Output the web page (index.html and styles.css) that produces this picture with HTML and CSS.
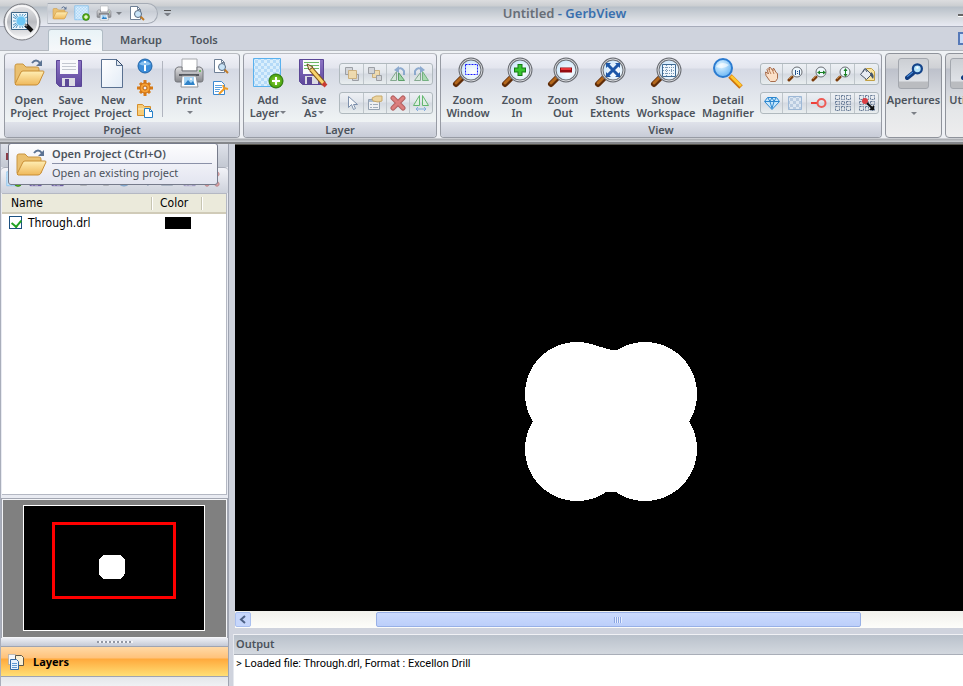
FILE: index.html
```html
<!DOCTYPE html>
<html lang="en">
<head>
    <meta charset="UTF-8">
    <meta name="viewport" content="width=device-width, initial-scale=1.0">
    <title>Untitled - GerbView</title>
    <link rel="stylesheet" href="styles.css">
</head>
<body>
    <!-- icon set -->
    <svg class="sprite" width="0" height="0" aria-hidden="true">
        <defs>
            <linearGradient id="gFolder" x1="0" y1="0" x2="0" y2="1"><stop offset="0" stop-color="#ffeeb4"/><stop offset="1" stop-color="#efb85a"/></linearGradient>
            <linearGradient id="gPage" x1="0" y1="0" x2="1" y2="1"><stop offset="0" stop-color="#ffffff"/><stop offset="1" stop-color="#e2ebf6"/></linearGradient>
            <linearGradient id="gGrey" x1="0" y1="0" x2="0" y2="1"><stop offset="0" stop-color="#e0e0e2"/><stop offset="1" stop-color="#85878c"/></linearGradient>
            <linearGradient id="gPurple" x1="0" y1="0" x2="0" y2="1"><stop offset="0" stop-color="#8d74c4"/><stop offset="1" stop-color="#5d479c"/></linearGradient>
            <linearGradient id="gDisc" x1="0" y1="0" x2="0" y2="1"><stop offset="0" stop-color="#e9e9eb"/><stop offset=".5" stop-color="#b9bbc0"/><stop offset="1" stop-color="#fbfbfc"/></linearGradient>
            <radialGradient id="gLens" cx=".6" cy=".6" r=".7"><stop offset="0" stop-color="#ffffff"/><stop offset="1" stop-color="#c3e2fa"/></radialGradient>
            <radialGradient id="gBlueLens" cx=".4" cy=".35" r=".7"><stop offset="0" stop-color="#e2f5ff"/><stop offset="1" stop-color="#65b4f5"/></radialGradient>
            <radialGradient id="gGreen"><stop offset="0" stop-color="#9fe03c"/><stop offset="1" stop-color="#3f9a0c"/></radialGradient>
            <pattern id="pCheck" width="6" height="6" patternUnits="userSpaceOnUse"><rect width="6" height="6" fill="#d9eefc"/><rect width="3" height="3" fill="#b5daf8"/><rect x="3" y="3" width="3" height="3" fill="#b5daf8"/></pattern>
            <pattern id="pFade" width="6" height="6" patternUnits="userSpaceOnUse"><rect width="6" height="6" fill="#dce6f1"/><rect width="3" height="3" fill="#b9cbe0"/><rect x="3" y="3" width="3" height="3" fill="#b9cbe0"/></pattern>
        </defs>

        <symbol id="folder" viewBox="0 0 32 32">
            <path d="M2 26V9q0-2 2-2h6l3 3h11q2 0 2 2v14z" fill="#eac070" stroke="#c99643"/>
            <path d="M2 27l6-12q1-1 2-1h20q1 0 1 1l-5 11q-1 2-3 2H3z" fill="url(#gFolder)" stroke="#c98e35"/>
            <path d="M19 6q4-5 8 0" fill="none" stroke="#5c7393" stroke-width="2"/>
            <path d="M29 3v6h-6z" fill="#5c7393"/>
        </symbol>
        <symbol id="floppy" viewBox="0 0 32 32">
            <path d="M1.500 3.500h25v26h-22l-3-3z" fill="url(#gPurple)" stroke="#5a4696"/>
            <path d="M5 3h18v14H5z" fill="#f8f9fb"/>
            <path d="M7 6.500h14M7 9.500h14M7 12.500h14" stroke="#c3c7cf"/>
            <path d="M7 21h13v8H7z" fill="#dcdce4"/>
            <path d="M10 22h4v7h-4z" fill="#5b4896"/>
        </symbol>
        <symbol id="page" viewBox="0 0 32 32">
            <path d="M4.500 2.500h15l6 6v22h-21z" fill="url(#gPage)" stroke="#5a7191"/>
            <path d="M19.500 2.500v6h6" fill="#dfe7f0" stroke="#5a7191"/>
            <path d="M19.500 2.500l6 6" stroke="#2e4464"/>
        </symbol>
        <symbol id="printer" viewBox="0 0 32 32">
            <path d="M9 2h15v12H9z" fill="#fff" stroke="#a5a8ad"/>
            <path d="M5 10h4v4h15v-4h3q3 1 3 4v9q0 2-2 2H4q-2 0-2-2v-9q0-3 3-4z" fill="url(#gGrey)" stroke="#75777c"/>
            <path d="M6 18h20" stroke="#55585e" stroke-width="2"/>
            <circle cx="27" cy="14" r="1" fill="#4fb53f"/>
            <path d="M9 19h14l2 11H8z" fill="#fff" stroke="#8d9197"/>
            <path d="M11 20h10v8H11z" fill="#a5d4f5"/>
            <path d="M11 28l4-5 3 3 2-2 2 4z" fill="#2f82c8"/>
            <circle cx="18" cy="22" r="1" fill="#fff"/>
        </symbol>
        <symbol id="preview" viewBox="0 0 16 16">
            <path d="M1.500 1.500h7l3 3v10h-10z" fill="#fff" stroke="#6f8096"/>
            <path d="M8.500 1.500v3h3" fill="none" stroke="#6f8096"/>
            <path d="M11 11l4 4" stroke="#c07a25" stroke-width="2"/>
            <circle cx="9" cy="9" r="3.500" fill="#c9e4f8" stroke="#586a80"/>
        </symbol>
        <symbol id="info" viewBox="0 0 16 16">
            <circle cx="8" cy="8" r="7" fill="#3c8cd8" stroke="#1f64a8"/>
            <path d="M2 6q6-6 12 0-6 3-12 0" fill="#8cc2f0"/>
            <path d="M7 7h2v6H7zM7 3h2v2H7z" fill="#fff"/>
        </symbol>
        <symbol id="gear" viewBox="0 0 16 16">
            <path d="M8 0v16M0 8h16M3 3l10 10M13 3L3 13" stroke="#d87b17" stroke-width="3"/>
            <circle cx="8" cy="8" r="5" fill="#f7a235" stroke="#cb6e12"/>
            <circle cx="8" cy="8" r="2" fill="#f1f1f3" stroke="#b95f0c"/>
        </symbol>
        <symbol id="folderdoc" viewBox="0 0 16 16">
            <path d="M.5 13.500v-11h5l2 2h6v9z" fill="#f6cc79" stroke="#d58e2b"/>
            <path d="M1 7h12" stroke="#fff0c2"/>
            <path d="M7.500 6.500h5l3 3v6h-8z" fill="#fff" stroke="#2580c8"/>
            <path d="M12.500 6.500v3h3" fill="none" stroke="#2580c8"/>
        </symbol>
        <symbol id="docwrench" viewBox="0 0 16 16">
            <path d="M.5 1.500h8l3 3v10H.5z" fill="#fff" stroke="#3a88d0"/>
            <path d="M2 5.500h7M2 7.500h7M2 9.500h5M2 11.500h4" stroke="#5da2df"/>
            <path d="M6 14l6-6M10 5l1 3 4 1" stroke="#ef9b24" stroke-width="2" fill="none"/>
        </symbol>
        <symbol id="addlayer" viewBox="0 0 32 32">
            <path d="M1.500 1.500h27v28h-27z" fill="url(#pCheck)" stroke="#5ab1ee"/>
            <circle cx="24" cy="24" r="7" fill="url(#gGreen)" stroke="#2b7508"/>
            <path d="M24 20v8M20 24h8" stroke="#fff" stroke-width="2"/>
        </symbol>
        <symbol id="saveas" viewBox="0 0 32 32">
            <path d="M1.500 2.500h24v25h-21l-3-3z" fill="url(#gPurple)" stroke="#5a4696"/>
            <path d="M5 3h17v14H5z" fill="#fafbfa"/>
            <path d="M6 5.500h15M6 8.500h15M6 11.500h15" stroke="#6cb864"/>
            <path d="M7 19h13v8H7z" fill="#dcdce4"/>
            <path d="M9 20h5v7H9z" fill="#5b4896"/>
            <path d="M13 12l13 15" stroke="#83571b" stroke-width="5"/>
            <path d="M13 12l13 15" stroke="#f8d36c" stroke-width="3"/>
            <path d="M25 26l3 3" stroke="#c83c33" stroke-width="4"/>
            <path d="M9 7l2 6 4-3z" fill="#f4dfb3" stroke="#6b4a1c"/>
        </symbol>
        <symbol id="zoomlens" viewBox="0 0 32 32">
            <path d="M10 21l-6 6" stroke="#5f2c08" stroke-width="6" stroke-linecap="round"/>
            <path d="M10 20l-6 6" stroke="#b3671c" stroke-width="3" stroke-linecap="round"/>
            <path d="M10 21l3-3" stroke="#555" stroke-width="2"/>
            <circle cx="19" cy="13" r="11" fill="url(#gLens)" stroke="#6b6e74" stroke-width="3"/>
            <circle cx="19" cy="13" r="11" fill="none" stroke="#d8dade"/>
        </symbol>
        <symbol id="detail" viewBox="0 0 32 32">
            <path d="M18 19l11 11" stroke="#ce740b" stroke-width="5"/>
            <path d="M19 19l10 10" stroke="#ffc62f" stroke-width="3"/>
            <circle cx="11" cy="11" r="9" fill="url(#gBlueLens)" stroke="#2b7bd0" stroke-width="2"/>
            <path d="M4 10q5-7 13-2-5 5-13 2" fill="#fff" opacity=".6"/>
        </symbol>
        <symbol id="smalllens" viewBox="0 0 16 16">
            <path d="M5 11l-3 3" stroke="#7b3c0c" stroke-width="3" stroke-linecap="round"/>
            <path d="M5 10l-3 3" stroke="#c4813a"/>
            <circle cx="10" cy="6" r="5" fill="#eef7fd" stroke="#696c72"/>
        </symbol>
        <symbol id="front" viewBox="0 0 16 16">
            <path d="M1.500 1.500h7v7h-7zM8.500 8.500h6v6h-6z" fill="#cfd1d5" stroke="#8b8e94"/>
            <path d="M4.500 4.500h8v8h-8z" fill="#f3d9a2" stroke="#c7a466"/>
        </symbol>
        <symbol id="back" viewBox="0 0 16 16">
            <path d="M5.500 4.500h7v7h-7z" fill="#f3d9a2" stroke="#c7a466"/>
            <path d="M1.500 1.500h6v6h-6zM9.500 9.500h5v5h-5z" fill="#cfd1d5" stroke="#8b8e94"/>
        </symbol>
        <symbol id="rotl" viewBox="0 0 16 16">
            <path d="M.5 14.500h6v-9z" fill="#d5e8d9" stroke="#6f9a7a"/><path d="M8.500 14.500h6l-6-8z" fill="#8fd398" stroke="#3d8f4b"/>
            <path d="M7 4q4-4 7 1v4" fill="none" stroke="#789cc8" stroke-width="2"/><path d="M4 4l5-4v7z" fill="#789cc8"/>
        </symbol>
        <symbol id="rotr" viewBox="0 0 16 16">
            <path d="M15.500 14.500h-6v-9z" fill="#9cd8a4" stroke="#5aa567"/><path d="M7.500 14.500h-6l6-8z" fill="#d5e8d9" stroke="#6f9a7a"/>
            <path d="M9 4Q5 0 2 5v4" fill="none" stroke="#789cc8" stroke-width="2"/><path d="M12 4L7 0v7z" fill="#789cc8"/>
        </symbol>
        <symbol id="cursor" viewBox="0 0 16 16"><path d="M4.500 1.500v11l3-3 2 5 2-1-2-4h4z" fill="#fff" stroke="#667d9e"/></symbol>
        <symbol id="props" viewBox="0 0 16 16">
            <path d="M1.500 4.500h11v10h-11z" fill="#f5f6f8" stroke="#8291a3"/><path d="M2 6h10" stroke="#9db2cc" stroke-width="2"/>
            <path d="M3 9.500h2M6 9.500h5M3 12.500h2M6 12.500h5" stroke="#94a1b0"/><path d="M5 3l4-2h6v5l-4 1-5-1z" fill="#edcf8c" stroke="#c19a4b"/>
        </symbol>
        <symbol id="delete" viewBox="0 0 16 16"><path d="M3 3l10 10M13 3L3 13" stroke="#a83f3f" stroke-width="5" stroke-linecap="round"/><path d="M3 3l10 10M13 3L3 13" stroke="#dc6663" stroke-width="3" stroke-linecap="round"/></symbol>
        <symbol id="mirror" viewBox="0 0 16 16"><path d="M.5 10.500h6v-10zM9.500 10.500h6l-6-10z" fill="#e0f3e1" stroke="#45ac52"/><path d="M3 14h10M5 12l-2 2 2 2M11 12l2 2-2 2" fill="none" stroke="#6b9bd8"/></symbol>
        <symbol id="hand" viewBox="0 0 16 16">
            <path d="M5.500 14.500L2 9.500 1.500 6l2 1 1 1L3 3.500l1-1L5.500 4 5 1.500h1.500L9 5V2.500h1l2 4 1.500 1v5l-2 3h-5z" fill="#fbe0c8" stroke="#a86d4c"/>
            <path d="M5 4l2 4M8 3l2 5" stroke="#bd8159"/>
        </symbol>
        <symbol id="bucket" viewBox="0 0 16 16">
            <path d="M7.500 2.500h5l3 3v9h-9z" fill="#f9e5a0" stroke="#c2a043"/><path d="M1.500 8.500l5-6 6 6-5 5z" fill="#e7ebf1" stroke="#4a5768"/>
            <path d="M4 6q1-6 4 0" fill="none" stroke="#4a5768"/><path d="M12 6q4 3 2 7l-3-4z" fill="#44566c"/>
        </symbol>
        <symbol id="diamond" viewBox="0 0 16 16"><path d="M3.500 2.500h9l3 4-7.500 8L.5 6.500z" fill="#c6e7fc" stroke="#2b86cf"/><path d="M1 6.500h14M4 3l2 3.500 2 7 2-7L12 3M6 6l2-3 2 3" fill="none" stroke="#2b86cf"/></symbol>
        <symbol id="fade" viewBox="0 0 16 16"><path d="M1.500 1.500h13v13h-13z" fill="url(#pFade)" stroke="#9db8d6"/></symbol>
        <symbol id="node" viewBox="0 0 16 16"><path d="M0 8h7" stroke="#ee4038" stroke-width="2"/><circle cx="10.500" cy="8" r="4" fill="none" stroke="#ee5a54" stroke-width="2"/></symbol>
        <symbol id="grid" viewBox="0 0 16 16"><path d="M.5.5h4v4h-4zM6.500.5h3v4h-3zM11.500.5h4v4h-4zM.5 6.500h4v3h-4zM6.500 6.500h3v3h-3zM11.500 6.500h4v3h-4zM.5 11.500h4v4h-4zM6.500 11.500h3v4h-3zM11.500 11.500h4v4h-4z" fill="none" stroke="#667a96" stroke-dasharray="2 1"/></symbol>
        <symbol id="snap" viewBox="0 0 16 16"><use href="#grid" width="16" height="16"/><circle cx="6" cy="6" r="3" fill="#db3d43"/><path d="M8 8l5 5" stroke="#111" stroke-width="2"/><path d="M15 10v5h-5z" fill="#111"/></symbol>
        <symbol id="layers" viewBox="0 0 16 16">
            <path d="M.5.5h7v10h-7z" fill="#f4f7fb" stroke="#8795a8" stroke-dasharray="1 1"/>
            <path d="M7.500 1.500h6l2 2v8h-8z" fill="#f9efd5" stroke="#5d5748"/>
            <path d="M2.500 5.500h6l2 2v8h-8z" fill="#eaf3fc" stroke="#356aa5"/><path d="M4 9.500h5M4 11.500h5M4 13.500h5" stroke="#619bd3"/>
        </symbol>
        <symbol id="probe" viewBox="0 0 16 16">
            <path d="M7 10l-5 4" stroke="#123d81" stroke-width="4" stroke-linecap="round"/><path d="M7 9l-5 4" stroke="#4c93e2"/>
            <circle cx="11" cy="6" r="4" fill="#b5e4fb" stroke="#14448a" stroke-width="2"/><circle cx="11" cy="5" r="1" fill="#fff"/>
        </symbol>
    </svg>

    <header class="titlebar">
        <div class="quick-access">
            <button aria-label="Open Project"><svg class="icon"><use href="#folder"/></svg></button>
            <button aria-label="Add Layer"><svg class="icon"><use href="#addlayer"/></svg></button>
            <button aria-label="Print"><svg class="icon"><use href="#printer"/></svg></button>
            <button class="drop" aria-label="Print options"><span class="arrow"></span></button>
            <button aria-label="Print Preview"><svg class="icon"><use href="#preview"/></svg></button>
        </div>
        <button class="customize" aria-label="Customize toolbar"><span class="arrow"></span></button>
        <h1>Untitled <span>- GerbView</span></h1>
        <button class="minimize" aria-label="Minimize"></button>
    </header>
    <button class="app-button" aria-label="Application menu">
        <svg width="38" height="38" viewBox="0 0 38 38">
            <circle cx="19" cy="19" r="18" fill="url(#gDisc)" stroke="#75777d"/>
            <circle cx="19" cy="19" r="16" fill="none" stroke="#f6f6f7" stroke-width="2"/>
            <path d="M8.500 9.500h16v17h-16z" fill="#edf6fc" stroke="#3d6585"/>
            <path d="M10 11l13 14M23 11L10 25M10 18h14M17 11v14M10 14l14 8M10 22l14-8M13 11l7 14M20 11l-7 14" stroke="#4d93c2"/>
            <circle cx="18" cy="18" r="5" fill="#6cc5f3" stroke="#bfe7fb"/>
            <path d="M23 22l6 6" stroke="#111" stroke-width="4"/>
            <path d="M22 21l2 2" stroke="#888" stroke-width="2"/>
        </svg>
    </button>

    <nav class="tabs">
        <a href="#" class="active">Home</a>
        <a href="#" class="wide">Markup</a>
        <a href="#">Tools</a>
        <button class="mdi" aria-label="Window"></button>
    </nav>

    <div class="ribbon">
        <section class="group project">
            <div class="tools">
                <button class="big w42"><svg class="icon32"><use href="#folder"/></svg>Open<br>Project</button>
                <button class="big w42"><svg class="icon32"><use href="#floppy"/></svg>Save<br>Project</button>
                <button class="big w42"><svg class="icon32"><use href="#page"/></svg>New<br>Project</button>
                <div class="stack">
                    <button aria-label="Info"><svg class="icon"><use href="#info"/></svg></button>
                    <button aria-label="Settings"><svg class="icon"><use href="#gear"/></svg></button>
                    <button aria-label="Project files"><svg class="icon"><use href="#folderdoc"/></svg></button>
                </div>
                <div class="divider"></div>
                <button class="big w42"><svg class="icon32"><use href="#printer"/></svg>Print<br><span class="arrow"></span></button>
                <div class="stack">
                    <button aria-label="Print Preview"><svg class="icon"><use href="#preview"/></svg></button>
                    <button aria-label="Page Setup"><svg class="icon"><use href="#docwrench"/></svg></button>
                </div>
            </div>
            <h2>Project</h2>
        </section>

        <section class="group layer">
            <div class="tools">
                <button class="big w42"><svg class="icon32"><use href="#addlayer"/></svg>Add<br>Layer<span class="arrow"></span></button>
                <button class="big w50"><svg class="icon32"><use href="#saveas"/></svg>Save<br>As<span class="arrow"></span></button>
                <div class="strips">
                    <div class="strip faded">
                        <button aria-label="Bring to front"><svg class="icon"><use href="#front"/></svg></button>
                        <button aria-label="Send to back"><svg class="icon"><use href="#back"/></svg></button>
                        <button aria-label="Rotate left"><svg class="icon"><use href="#rotl"/></svg></button>
                        <button aria-label="Rotate right"><svg class="icon"><use href="#rotr"/></svg></button>
                    </div>
                    <div class="strip faded">
                        <button aria-label="Select"><svg class="icon"><use href="#cursor"/></svg></button>
                        <button aria-label="Properties"><svg class="icon"><use href="#props"/></svg></button>
                        <button aria-label="Delete"><svg class="icon"><use href="#delete"/></svg></button>
                        <button aria-label="Mirror"><svg class="icon"><use href="#mirror"/></svg></button>
                    </div>
                </div>
            </div>
            <h2>Layer</h2>
        </section>

        <section class="group view">
            <div class="tools">
                <button class="big w48"><svg class="icon32" viewBox="0 0 32 32"><use href="#zoomlens"/><path d="M13.500 7.500h12v10h-12z" fill="none" stroke="#1a1aff" stroke-dasharray="2 1"/></svg>Zoom<br>Window</button>
                <button class="big w50"><svg class="icon32" viewBox="0 0 32 32"><use href="#zoomlens"/><path d="M19 7v12M13 13h12" stroke="#127a14" stroke-width="5"/><path d="M19 8v10M14 13h10" stroke="#37c52f" stroke-width="3"/></svg>Zoom<br>In</button>
                <button class="big w42"><svg class="icon32" viewBox="0 0 32 32"><use href="#zoomlens"/><path d="M13 13h12" stroke="#930c12" stroke-width="5"/><path d="M14 12h10" stroke="#e8343a" stroke-width="2"/></svg>Zoom<br>Out</button>
                <button class="big w52"><svg class="icon32" viewBox="0 0 32 32"><use href="#zoomlens"/><path d="M14 8l10 10M24 8L14 18" stroke="#1d57a8" stroke-width="3"/><path d="M12 6h5l-5 5zM26 6h-5l5 5zM12 20h5l-5-5zM26 20h-5l5-5z" fill="#1d57a8"/></svg>Show<br>Extents</button>
                <button class="big w60"><svg class="icon32" viewBox="0 0 32 32"><use href="#zoomlens"/><path d="M12.500 7.500h13v12h-13z" fill="#eef6fc" stroke="#3d6a94"/><path d="M16.500 8v11M21.500 8v11M13 10.500h12M13 13.500h12M13 16.500h12" stroke="#7697b5" stroke-dasharray="1 1"/></svg>Show<br>Workspace</button>
                <button class="big w64"><svg class="icon32"><use href="#detail"/></svg>Detail<br>Magnifier</button>
                <div class="strips">
                    <div class="strip">
                        <button aria-label="Pan"><svg class="icon"><use href="#hand"/></svg></button>
                        <button aria-label="Zoom 1:1"><svg class="icon" viewBox="0 0 16 16"><use href="#smalllens"/><path d="M8.500 4v5M12.500 4v5M10.500 5v1M10.500 7v1" stroke="#23518c"/></svg></button>
                        <button aria-label="Fit width"><svg class="icon" viewBox="0 0 16 16"><use href="#smalllens"/><path d="M7 6.500h7" stroke="#198024"/><path d="M6 6.500l3-2v4zM15 6.500l-3-2v4z" fill="#198024"/></svg></button>
                        <button aria-label="Fit height"><svg class="icon" viewBox="0 0 16 16"><use href="#smalllens"/><path d="M10.500 3v7" stroke="#198024"/><path d="M10.500 2l-2 3h4zM10.500 11l-2-3h4z" fill="#198024"/></svg></button>
                        <button aria-label="Fill"><svg class="icon"><use href="#bucket"/></svg></button>
                    </div>
                    <div class="strip">
                        <button aria-label="Quality"><svg class="icon"><use href="#diamond"/></svg></button>
                        <button aria-label="Transparency"><svg class="icon"><use href="#fade"/></svg></button>
                        <button aria-label="Nodes"><svg class="icon"><use href="#node"/></svg></button>
                        <button aria-label="Grid"><svg class="icon"><use href="#grid"/></svg></button>
                        <button aria-label="Snap to grid"><svg class="icon"><use href="#snap"/></svg></button>
                    </div>
                </div>
            </div>
            <h2>View</h2>
        </section>

        <button class="collapsed"><span class="tile"><svg class="probe"><use href="#probe"/></svg></span>Apertures<span class="arrow"></span></button>
        <button class="collapsed narrow"><span class="tile"><svg class="probe"><use href="#probe"/></svg></span>Utilities<span class="arrow"></span></button>
    </div>

    <main>
        <aside>
            <div class="pane-title"></div>
            <div class="pane-tools">
                <svg class="icon"><use href="#addlayer"/></svg>
                <svg class="icon"><use href="#floppy"/></svg>
                <svg class="icon"><use href="#floppy"/></svg>
                <svg class="icon faint"><use href="#front"/></svg>
                <svg class="icon faint"><use href="#back"/></svg>
                <svg class="icon faint"><use href="#info"/></svg>
                <svg class="icon faint"><use href="#cursor"/></svg>
                <svg class="icon faint"><use href="#props"/></svg>
                <svg class="icon faint"><use href="#floppy"/></svg>
                <svg class="icon faint"><use href="#delete"/></svg>
            </div>
            <div class="list">
                <table>
                    <thead>
                        <tr><th class="col-name">Name</th><th class="col-color">Color</th><th></th></tr>
                    </thead>
                    <tbody>
                        <tr>
                            <td><input type="checkbox" id="layer1" checked><label for="layer1">Through.drl</label></td>
                            <td><span class="swatch"></span></td>
                            <td></td>
                        </tr>
                    </tbody>
                </table>
            </div>
            <div class="overview">
                <svg viewBox="0 0 182 126" width="182" height="126" shape-rendering="crispEdges">
                    <rect x=".5" y=".5" width="181" height="125" fill="#000" stroke="#fff"/>
                    <rect x="30.500" y="18.500" width="121" height="74" fill="none" stroke="#f00" stroke-width="3" stroke-linejoin="round"/>
                    <rect x="76" y="50" width="26" height="24" rx="7" fill="#fff"/>
                </svg>
            </div>
            <div class="splitter"><span></span></div>
            <button class="layers-tab"><svg class="icon"><use href="#layers"/></svg>Layers</button>
            <div class="pane-foot"></div>
        </aside>

        <div class="workspace">
            <div class="canvas">
                <svg viewBox="0 0 728 466" preserveAspectRatio="xMinYMin slice" shape-rendering="crispEdges" fill="#fff">
                    <circle cx="342" cy="249" r="52"/>
                    <circle cx="410" cy="249" r="52"/>
                    <circle cx="342" cy="304" r="52"/>
                    <circle cx="410" cy="304" r="52"/>
                    <path d="M350 198l16 4 11 3h8l14 90-15 52h-14l-20-50z"/>
                </svg>
            </div>
            <div class="scrollbar">
                <button aria-label="Scroll left"><svg width="8" height="9" viewBox="0 0 8 9"><path d="M6 1L2 4.500 6 8" fill="none" stroke="#4d6185" stroke-width="2"/></svg></button>
                <div class="track"><div class="thumb"><span></span></div></div>
            </div>
            <section class="output">
                <h2>Output</h2>
                <p>&gt; Loaded file: Through.drl, Format : Excellon Drill</p>
            </section>
        </div>
    </main>

    <div class="tooltip" role="tooltip">
        <svg class="icon32"><use href="#folder"/></svg>
        <div>
            <strong>Open Project (Ctrl+O)</strong>
            <p>Open an existing project</p>
        </div>
    </div>
</body>
</html>
```
FILE: styles.css
```css
* {
    box-sizing: border-box;
}
body {
    margin: 0;
    height: 100vh;
    display: flex;
    flex-direction: column;
    overflow: hidden;
    background: #cfd3dd;
    color: #4c535c;
    font-family: "Noto Sans", "Open Sans", sans-serif;
    font-size: 11px;
    font-weight: 600;
}
button {
    padding: 0;
    border: 0;
    background: none;
    color: inherit;
    font: inherit;
}
h1, h2, p {
    margin: 0;
    font-size: 11px;
    font-weight: 600;
}
svg {
    display: block;
    flex: none;
}
.sprite {
    position: absolute;
}
.icon {
    width: 16px;
    height: 16px;
}
.icon32 {
    width: 32px;
    height: 32px;
}
.arrow {
    display: inline-block;
    border: 3px solid transparent;
    border-top-color: #7b7f86;
    border-bottom: 0;
}

/* title bar */
.titlebar {
    position: relative;
    flex: none;
    display: flex;
    align-items: center;
    height: 27px;
    padding-left: 47px;
    border-bottom: 1px solid #a6abba;
    background: linear-gradient(#dcdddf, #cbced1 6px, #b8c0c9 7px, #d6dadf 18px, #e8eaf3);
}
.titlebar h1 {
    position: absolute;
    left: 0;
    right: 0;
    padding-left: 166px;
    text-align: center;
    font-size: 13px;
    color: #686e77;
    pointer-events: none;
}
.titlebar h1 span {
    color: #3a70ae;
}
.quick-access {
    display: flex;
    align-items: center;
    gap: 6px;
    width: 111px;
    height: 21px;
    padding-left: 4px;
    border: 1px solid #a5abb5;
    border-left-color: #c8ccd3;
    border-radius: 0 11px 11px 0;
    background: linear-gradient(#d9dce0, #c8cdd5 40%, #e4e7ed);
}
.quick-access .drop {
    display: flex;
    margin: 0 1px 0 -2px;
}
.customize {
    margin-left: 6px;
    width: 7px;
    border-top: 1px solid #555;
    line-height: 5px;
}
.customize .arrow {
    display: block;
    margin-top: 2px;
}
.minimize {
    width: 12px;
    height: 3px;
    margin-left: auto;
    margin-right: -7px;
    margin-top: 4px;
    background: #666;
    border-bottom: 1px solid #fff;
}
.app-button {
    position: absolute;
    left: 3px;
    top: 3px;
    z-index: 2;
}

/* tabs */
.tabs {
    flex: none;
    display: flex;
    align-items: flex-end;
    height: 24px;
    padding-left: 48px;
    border-bottom: 1px solid #b4b8be;
}
.tabs a {
    width: 50px;
    line-height: 21px;
    text-align: center;
    color: #4c535c;
    text-decoration: none;
}
.tabs .wide {
    width: 76px;
}
.tabs .active {
    width: 55px;
    margin-bottom: -1px;
    border: 1px solid #b1bcc5;
    border-bottom: 0;
    border-radius: 3px 3px 0 0;
    background: linear-gradient(#e9f3f7, #f6f8fa);
}
.mdi {
    width: 14px;
    height: 13px;
    margin: 0 -9px 5px auto;
    border: 2px solid #5679b8;
    background: #c9dcf8;
}

/* ribbon */
.ribbon {
    flex: none;
    display: flex;
    gap: 3px;
    height: 93px;
    padding: 2px 0 4px 4px;
    overflow: hidden;
    border-bottom: 2px solid #85878b;
    background: linear-gradient(#eff2f5, #eef0f4 87px, #a7a9ae 88px, #cdd0d4);
}
.group {
    flex: none;
    display: flex;
    flex-direction: column;
    border: 1px solid #979ba4;
    border-top-color: #b9bcc2;
    border-radius: 4px;
    background: linear-gradient(#f1f2f8, #e3e5ee 14px, #d5d9e4 15px, #eff3f4 68px);
}
.group h2 {
    height: 15px;
    line-height: 15px;
    text-align: center;
    border-radius: 0 0 3px 3px;
    background: linear-gradient(#dfe2ea, #c8ccd7);
}
.project {
    width: 236px;
}
.layer {
    width: 194px;
}
.view {
    width: 442px;
}
.tools {
    flex: 1;
    display: flex;
    padding: 3px 3px 0;
}
.big {
    flex: none;
    text-align: center;
    line-height: 13px;
    white-space: nowrap;
    align-self: flex-start;
}
.big .icon32 {
    margin: 0 auto 4px;
}
.big .arrow {
    margin-left: 1px;
    vertical-align: 3px;
}
.w42 { width: 42px; }
.w48 { width: 48px; }
.w50 { width: 50px; }
.w52 { width: 52px; }
.w60 { width: 60px; }
.w64 { width: 64px; }
.stack {
    display: flex;
    flex-direction: column;
    gap: 6px;
    padding: 1px 3px 0;
}
.divider {
    width: 1px;
    height: 56px;
    margin: 4px 5px 0 6px;
    background: #b1b5bf;
}
.strips {
    display: flex;
    flex-direction: column;
    gap: 7px;
    padding-top: 6px;
}
.strip {
    display: flex;
    border: 1px solid #b0b9be;
    border-radius: 3px;
    background: linear-gradient(#edf0f4, #e1e5eb 45%, #d4d9e1 50%, #e9eeef);
}
.strip button {
    width: 23px;
    height: 20px;
    display: flex;
    align-items: center;
    justify-content: center;
}
.strip button + button {
    border-left: 1px solid #bec5ca;
}
.view .strip button {
    width: 24px;
}
.view .strip button:first-child {
    width: 21px;
}
.faded .icon {
    opacity: .8;
}
.collapsed {
    flex: none;
    width: 57px;
    padding-top: 4px;
    display: flex;
    flex-direction: column;
    align-items: center;
    border: 1px solid #8f939b;
    border-radius: 4px;
    background: linear-gradient(#dfe0e2, #cfd1d5 14px, #bdc1cb 15px, #e5e7e9 56px, #ededee);
}
.narrow {
    width: 50px;
}
.collapsed .arrow {
    margin-top: 5px;
}
.tile {
    display: flex;
    justify-content: center;
    width: 31px;
    height: 31px;
    padding-top: 3px;
    margin-bottom: 3px;
    border: 1px solid #a3a7ae;
    border-radius: 3px;
    background: linear-gradient(#cccfd4, #dfe2e7 22px, #babcc0 23px);
}
.narrow .tile {
    width: 41px;
}
.probe {
    width: 18px;
    height: 18px;
}

/* left pane */
main {
    flex: 1;
    display: flex;
    gap: 6px;
    min-height: 0;
}
aside {
    flex: none;
    width: 229px;
    display: flex;
    flex-direction: column;
    border-left: 1px solid #a9aebb;
    border-right: 1px solid #9fa4b1;
    background: #e9ebf2;
}
.pane-title {
    height: 23px;
    background: linear-gradient(#8b3d48, #8b3d48) 5px 9px / 2px 7px no-repeat, linear-gradient(#dfe2ea, #c3c8d2);
}
.pane-tools {
    display: flex;
    gap: 6px;
    height: 26px;
    padding: 3px 5px;
    border-top: 1px solid #a9adb8;
    border-radius: 4px 4px 0 0;
    background: linear-gradient(#f2f3f8, #cdd1db);
}
.faint {
    opacity: .5;
}
.list {
    flex: 1;
    margin: 0 1px;
    border: 1px solid #b4b8c3;
    border-left: 0;
    background: #fff;
}
table {
    width: 100%;
    table-layout: fixed;
    border-collapse: collapse;
    font-family: "DejaVu Sans Condensed", Roboto, sans-serif;
    font-size: 12px;
    color: #000;
}
th, td {
    padding: 0;
    height: 19px;
    text-align: left;
    font-weight: 400;
}
th {
    padding-left: 9px;
    background: linear-gradient(90deg, #c7c5b2 1px, #fff 1px, #fff 2px, #ebeadb 2px) 0 3px / 100% 13px no-repeat #ebeadb;
    border-bottom: 2px solid #d0cbb8;
}
th:first-child {
    background: #ebeadb;
}
.col-name {
    width: 149px;
}
.col-color {
    width: 50px;
}
td .swatch {
    display: block;
    width: 26px;
    height: 12px;
    margin-left: 14px;
    background: #000;
}
input[type="checkbox"] {
    appearance: none;
    position: relative;
    width: 13px;
    height: 13px;
    margin: -2px 6px 0 7px;
    border: 1px solid #1c5180;
    background: #fff;
    vertical-align: middle;
}
input[type="checkbox"]:checked::before {
    content: "";
    position: absolute;
    left: 3px;
    top: 1px;
    width: 5px;
    height: 7px;
    border: solid #21a121;
    border-width: 0 2px 2px 0;
    transform: rotate(40deg);
}
.overview {
    flex: none;
    display: flex;
    padding: 5px 20px;
    margin: 4px 1px 0;
    height: 139px;
    border: 1px solid #f4f5f8;
    outline: 1px solid #a3a7b2;
    background: #808080;
}
.splitter {
    flex: none;
    height: 8px;
    padding-top: 3px;
    background: linear-gradient(#edeff5, #c5cad6);
}
.splitter span {
    display: block;
    width: 36px;
    height: 2px;
    margin: 0 auto;
    background: repeating-linear-gradient(90deg, #9398a4 0 2px, #f3f4f8 2px 4px);
}
.layers-tab {
    flex: none;
    display: flex;
    align-items: center;
    gap: 9px;
    height: 31px;
    padding-left: 7px;
    border-top: 1px solid #9fa4b1;
    border-bottom: 1px solid #9fa4b1;
    background: linear-gradient(#ffd9a6, #ffc27a 11px, #ffa93c 12px, #ffdf76);
    color: #000;
    font-weight: 700;
}
.pane-foot {
    flex: none;
    height: 9px;
    background: linear-gradient(#e3e6ea, #f0f1f4);
}

/* workspace */
.workspace {
    flex: 1;
    min-width: 0;
    display: flex;
    flex-direction: column;
}
.canvas {
    flex: 1;
    min-height: 0;
    background: #000;
    border-top: 1px solid #55534c;
}
.canvas svg {
    width: 100%;
    height: 100%;
}
.scrollbar {
    flex: none;
    display: flex;
    height: 17px;
    background: linear-gradient(#f1f1ec, #fdfdfa);
}
.scrollbar button {
    width: 16px;
    margin: 1px 1px 1px 0;
    display: flex;
    align-items: center;
    justify-content: center;
    border: 1px solid #a9bfef;
    border-radius: 2px;
    background: #c6d6fb;
}
.track {
    flex: 1;
    padding: 1px 14% 1px 17%;
}
.thumb {
    display: flex;
    align-items: center;
    justify-content: center;
    height: 15px;
    border: 1px solid #98b0e6;
    border-radius: 2px;
    background: linear-gradient(#cbdafd, #bccffa);
}
.thumb span {
    width: 8px;
    height: 6px;
    background: repeating-linear-gradient(90deg, #8ca6e2 0 1px, #e6eefe 1px 2px);
}
.output {
    flex: none;
    height: 52px;
    margin-top: 6px;
    margin-left: -2px;
    border-left: 1px solid #e5e8ee;
    border-top: 1px solid #f0f1f5;
    background: #fff;
}
.output h2 {
    height: 20px;
    padding-left: 2px;
    line-height: 18px;
    border-bottom: 1px solid #a9aeb8;
    background: linear-gradient(#b9c1cb, #d3d8df);
}
.output p {
    padding: 2px;
    font-family: Roboto, "DejaVu Sans Condensed", sans-serif;
    font-weight: 400;
    color: #000;
}

/* hover tip over the left pane */
.tooltip {
    position: absolute;
    left: 8px;
    top: 143px;
    width: 210px;
    height: 42px;
    display: flex;
    gap: 5px;
    padding: 3px 5px 4px 6px;
    border: 1px solid #767b8b;
    border-radius: 3px;
    background: linear-gradient(#fdfdfe, #e3e5f0);
    line-height: 15px;
}
.tooltip div {
    flex: 1;
}
.tooltip strong {
    display: block;
    height: 17px;
    line-height: 13px;
    border-bottom: 1px solid #8b91a8;
    font-weight: 600;
}
.tooltip p {
    font-weight: 400;
    line-height: 17px;
}
```
